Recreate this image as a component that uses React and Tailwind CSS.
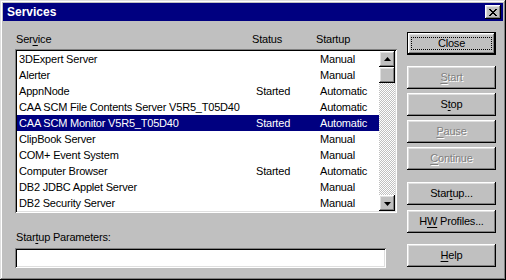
import React from "react";

const raised =
  "shadow-[inset_-1px_-1px_0_#000,inset_1px_1px_0_#fff,inset_-2px_-2px_0_#808080,inset_2px_2px_0_#dfdfdf]";
const sunken =
  "shadow-[inset_1px_1px_0_#808080,inset_-1px_-1px_0_#fff,inset_2px_2px_0_#000,inset_-2px_-2px_0_#dfdfdf]";

const services = [
  ["3DExpert Server", "", "Manual"],
  ["Alerter", "", "Manual"],
  ["AppnNode", "Started", "Automatic"],
  ["CAA SCM File Contents Server V5R5_T05D40", "", "Automatic"],
  ["CAA SCM Monitor V5R5_T05D40", "Started", "Automatic"],
  ["ClipBook Server", "", "Manual"],
  ["COM+ Event System", "", "Manual"],
  ["Computer Browser", "Started", "Automatic"],
  ["DB2 JDBC Applet Server", "", "Manual"],
  ["DB2 Security Server", "", "Manual"],
];

function Label({ text, at }) {
  // underline the access key letter
  if (at < 0) return <span>{text}</span>;
  return (
    <span>
      {text.slice(0, at)}
      <span className="underline underline-offset-[2px]">{text[at]}</span>
      {text.slice(at + 1)}
    </span>
  );
}

function Button({ text, at = -1, disabled, className = "" }) {
  return (
    <div
      className={`h-[23px] w-[89px] flex items-center justify-center bg-[#c0c0c0] ${raised} ${
        disabled ? "text-[#808080] [text-shadow:1px_1px_0_#fff]" : "text-black"
      } ${className}`}
    >
      <Label text={text} at={at} />
    </div>
  );
}

function Arrow({ down }) {
  return (
    <div className={`w-[16px] h-[16px] flex items-center justify-center bg-[#c0c0c0] ${raised}`}>
      <svg width="7" height="4" viewBox="0 0 7 4" className={down ? "mt-[1px]" : "-mt-[1px]"}>
        {down ? <path d="M0 0h7L3.5 4z" fill="#000" /> : <path d="M0 4h7L3.5 0z" fill="#000" />}
      </svg>
    </div>
  );
}

export default function App() {
  return (
    <div
      className="w-[506px] h-[280px] bg-[#c0c0c0] p-[3px] flex flex-col text-[11px] tracking-[-0.2px] text-black shadow-[inset_-1px_-1px_0_#000,inset_1px_1px_0_#dfdfdf,inset_-2px_-2px_0_#808080,inset_2px_2px_0_#fff]"
      style={{ fontFamily: '"Liberation Sans", Arial, sans-serif' }}
    >
      {/* title bar */}
      <div className="h-[18px] bg-[#000080] flex items-center justify-between pl-[4px] pr-[2px]">
        <span className="text-white font-bold text-[12px] tracking-normal">Services</span>
        <div className={`w-[16px] h-[14px] flex items-center justify-center bg-[#c0c0c0] ${raised}`}>
          <svg width="8" height="7" viewBox="0 0 8 7" className="-ml-[1px]" shapeRendering="crispEdges">
            <path
              d="M0 0h2v1h-2zM6 0h2v1h-2zM1 1h2v1h-2zM5 1h2v1h-2zM2 2h4v1h-4zM3 3h2v1h-2zM2 4h4v1h-4zM1 5h2v1h-2zM5 5h2v1h-2zM0 6h2v1h-2zM6 6h2v1h-2z"
              fill="#000"
            />
          </svg>
        </div>
      </div>

      <div className="flex flex-1 pl-[12px]">
        {/* left column */}
        <div className="w-[382px] flex flex-col">
          <div className="mt-[10px] h-[16px] grid grid-cols-[236px_64px_1fr] items-center pl-[1px]">
            <Label text="Service" at={3} />
            <span>Status</span>
            <span>Startup</span>
          </div>
          <div className={`mt-[2px] h-[164px] bg-white p-[2px] flex ${sunken}`}>
            <div className="flex-1 flex flex-col overflow-hidden">
              {services.map(([name, status, startup], i) => (
                <div
                  key={name}
                  className={`h-[16px] shrink-0 grid grid-cols-[237px_64px_1fr] items-center pl-[2px] whitespace-nowrap ${
                    i === 4 ? "bg-[#000080] text-white" : ""
                  }`}
                >
                  <span>{name}</span>
                  <span>{status}</span>
                  <span>{startup}</span>
                </div>
              ))}
            </div>
            <div className="w-[16px] flex flex-col">
              <Arrow />
              <div className={`w-[16px] h-[16px] bg-[#c0c0c0] ${raised}`} />
              <div className="flex-1 bg-[repeating-conic-gradient(#c0c0c0_0%_25%,#fff_0%_50%)] bg-[length:2px_2px]" />
              <Arrow down />
            </div>
          </div>
          <div className="mt-[16px] h-[16px] flex items-center pl-[1px]">
            <Label text="Startup Parameters:" at={4} />
          </div>
          <div className={`mt-[3px] h-[20px] w-[371px] bg-white ${sunken}`} />
        </div>

        {/* right column */}
        <div className="ml-[10px] flex flex-col">
          <div className="mt-[11px] h-[23px] w-[89px] bg-black p-[1px]">
            <div
              className={`h-full w-full flex items-center justify-center bg-[#c0c0c0] shadow-[inset_-1px_-1px_0_#000,inset_1px_1px_0_#fff,inset_-2px_-2px_0_#808080,inset_2px_2px_0_#dfdfdf]`}
            >
              <div className="h-[13px] w-[81px] border border-dotted border-black flex items-center justify-center">
                Close
              </div>
            </div>
          </div>
          <Button text="Start" at={0} disabled className="mt-[11px]" />
          <Button text="Stop" at={1} className="mt-[4px]" />
          <Button text="Pause" at={0} disabled className="mt-[4px]" />
          <Button text="Continue" at={0} disabled className="mt-[4px]" />
          <Button text="Startup..." at={4} className="mt-[12px]" />
          <Button text="HW Profiles..." at={1} className="mt-[5px]" />
          <Button text="Help" at={0} className="mt-[11px]" />
        </div>
      </div>
    </div>
  );
}
